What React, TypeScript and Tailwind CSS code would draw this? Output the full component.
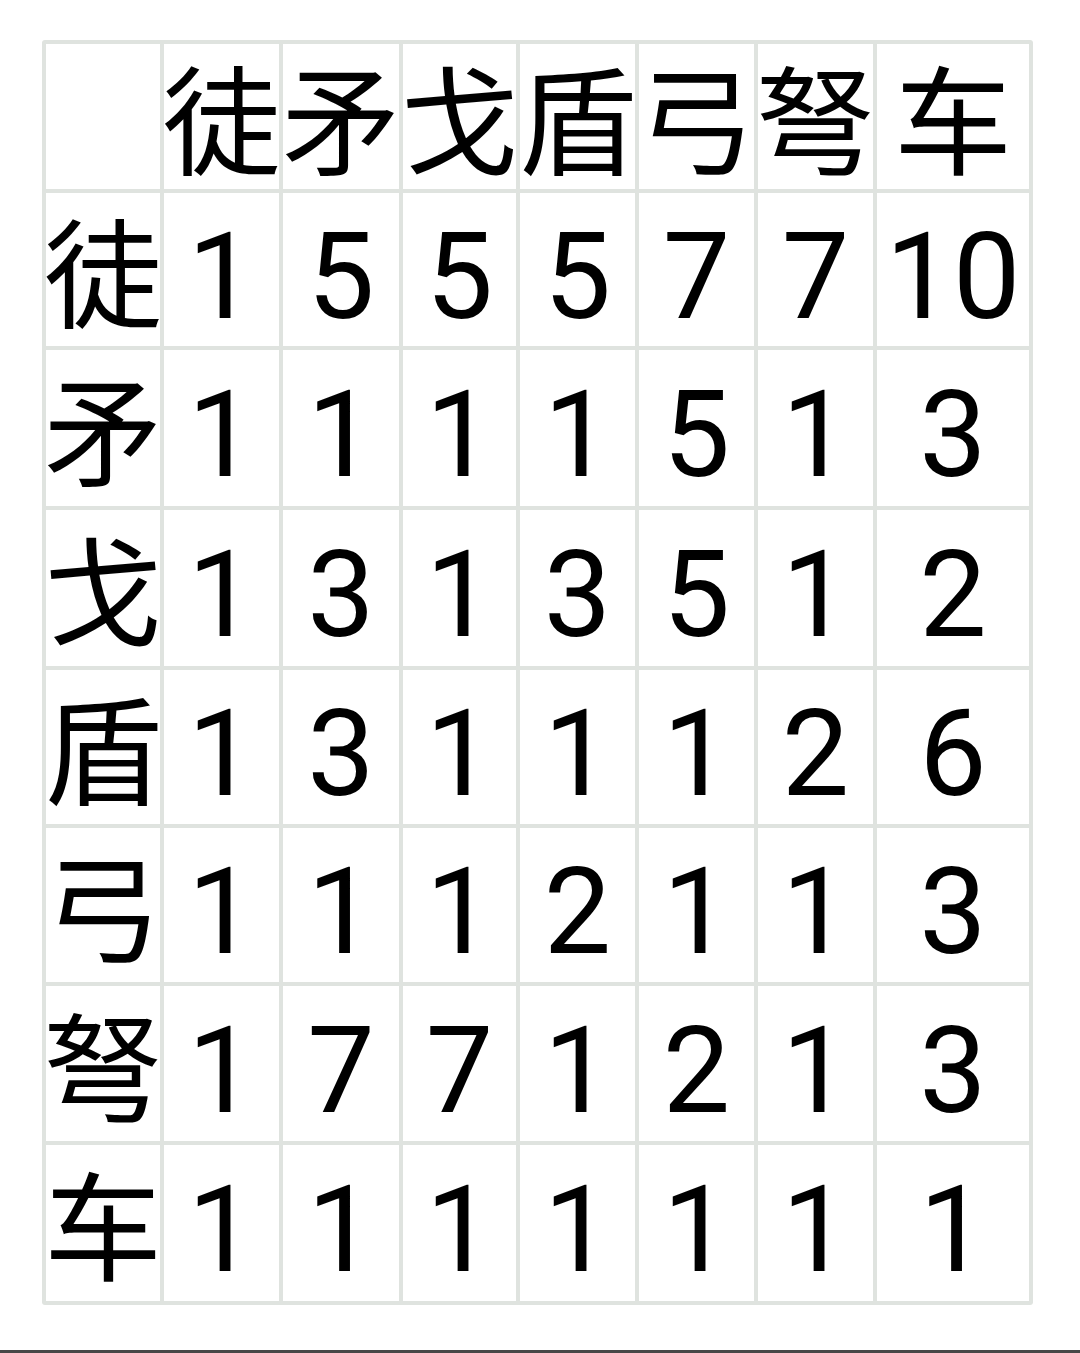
import React from "react";

const heads = ["徒", "矛", "戈", "盾", "弓", "弩", "车"];

const rows: { label: string; values: number[] }[] = [
  { label: "徒", values: [1, 5, 5, 5, 7, 7, 10] },
  { label: "矛", values: [1, 1, 1, 1, 5, 1, 3] },
  { label: "戈", values: [1, 3, 1, 3, 5, 1, 2] },
  { label: "盾", values: [1, 3, 1, 1, 1, 2, 6] },
  { label: "弓", values: [1, 1, 1, 2, 1, 1, 3] },
  { label: "弩", values: [1, 7, 7, 1, 2, 1, 3] },
  { label: "车", values: [1, 1, 1, 1, 1, 1, 1] },
];

const Cell: React.FC<{ children?: React.ReactNode; cjk?: boolean }> = ({ children, cjk }) => (
  <div
    className={
      cjk
        ? "bg-white flex items-center justify-center text-[118px] leading-none pt-[18px]"
        : "bg-white flex items-center justify-center text-[120px] leading-none pt-[14px]"
    }
  >
    {children}
  </div>
);

export default function App() {
  return (
    <div className="h-[1353px] flex flex-col bg-white font-['Roboto','Noto_Sans_CJK_SC',sans-serif] text-black">
      <div className="ml-[42px] mt-[40px] w-fit grid grid-cols-[114px_115px_116px_113px_115px_115px_115px_152px] grid-rows-[145px_153px_156px_156px_154px_154px_155px_156px] gap-[4px] p-[4px] bg-[#dfe3df] rounded-[3px]">
        <Cell />
        {heads.map((h, i) => (
          <Cell key={"h" + i} cjk>
            {h}
          </Cell>
        ))}
        {rows.map((r) => (
          <React.Fragment key={r.label}>
            <Cell cjk>{r.label}</Cell>
            {r.values.map((v, j) => (
              <Cell key={r.label + j}>{v}</Cell>
            ))}
          </React.Fragment>
        ))}
      </div>
      <div className="mt-auto h-[3px] bg-[#474747]" />
    </div>
  );
}
